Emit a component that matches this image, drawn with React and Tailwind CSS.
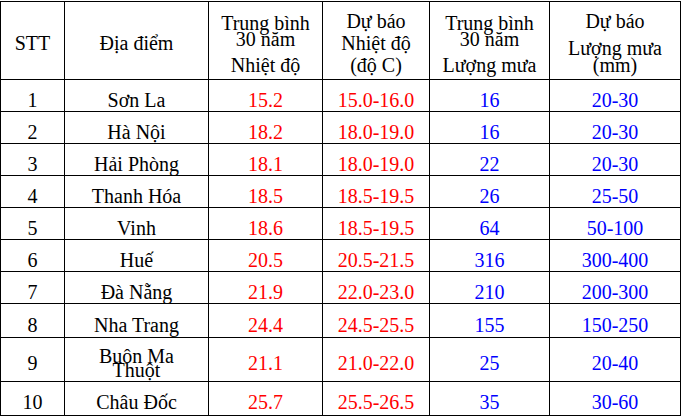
const rows = [
  ['1', 'Sơn La', '15.2', '15.0-16.0', '16', '20-30'],
  ['2', 'Hà Nội', '18.2', '18.0-19.0', '16', '20-30'],
  ['3', 'Hải Phòng', '18.1', '18.0-19.0', '22', '20-30'],
  ['4', 'Thanh Hóa', '18.5', '18.5-19.5', '26', '25-50'],
  ['5', 'Vinh', '18.6', '18.5-19.5', '64', '50-100'],
  ['6', 'Huế', '20.5', '20.5-21.5', '316', '300-400'],
  ['7', 'Đà Nẵng', '21.9', '22.0-23.0', '210', '200-300'],
  ['8', 'Nha Trang', '24.4', '24.5-25.5', '155', '150-250'],
  ['9', 'Buôn Ma Thuột', '21.1', '21.0-22.0', '25', '20-40'],
  ['10', 'Châu Đốc', '25.7', '25.5-26.5', '35', '30-60'],
];

// bottom padding per row, to sit the text low in the cell like the original
const pads = ['pb-[1px]', 'pb-[1px]', 'pb-[1px]', 'pb-[1px]', 'pb-[1px]', 'pb-[1px]', 'pb-[1px]', 'pb-[2px]', 'pb-[8px]', 'pb-[3px]'];
const colors = ['text-black', 'text-black', 'text-[#ff0000]', 'text-[#ff0000]', 'text-[#0000ff]', 'text-[#0000ff]'];

function Cell({ children, className = '' }) {
  return (
    <div className={`flex justify-center items-end bg-white leading-[20px] whitespace-nowrap ${className}`}>
      {children}
    </div>
  );
}

export default function App() {
  return (
    <div className="bg-white w-[683px] h-[419px] pt-px font-serif text-[20px] text-black">
      <div className="grid grid-cols-[63px_143px_113px_106px_119px_130px] grid-rows-[77px_repeat(7,31px)_33px_43px_33px] gap-px bg-black p-px w-[681px] font-[Liberation_Serif]">
        {/* header */}
        <div className="flex justify-center items-start bg-white pt-[31px] leading-[20px]">STT</div>
        <div className="flex justify-center items-start bg-white pt-[31px] leading-[20px]">Địa điểm</div>
        <div className="flex flex-col items-center bg-white pt-[13px] leading-[16px] whitespace-nowrap">
          <div>Trung bình</div>
          <div>30 năm</div>
          <div className="mt-[10px]">Nhiệt độ</div>
        </div>
        <div className="flex flex-col items-center bg-white pt-[8px] leading-[22px] whitespace-nowrap">
          <div>Dự báo</div>
          <div>Nhiệt độ</div>
          <div>(độ C)</div>
        </div>
        <div className="flex flex-col items-center bg-white pt-[13px] leading-[16px] whitespace-nowrap">
          <div>Trung bình</div>
          <div>30 năm</div>
          <div className="mt-[10px]">Lượng mưa</div>
        </div>
        <div className="flex flex-col items-center bg-white pt-[9px] leading-[20px] whitespace-nowrap">
          <div>Dự báo</div>
          <div className="mt-[7px]">Lượng mưa</div>
          <div className="-mt-[3px]">(mm)</div>
        </div>

        {rows.map((r, i) =>
          r.map((v, j) => {
            if (i === 8 && j === 1) {
              return (
                <div key={`${i}-${j}`} className="flex flex-col justify-end items-center bg-white leading-[14px] pb-[4px]">
                  <div>Buôn Ma</div>
                  <div>Thuột</div>
                </div>
              );
            }
            return (
              <Cell key={`${i}-${j}`} className={`${pads[i]} ${colors[j]}`}>
                {v}
              </Cell>
            );
          })
        )}
      </div>
    </div>
  );
}
